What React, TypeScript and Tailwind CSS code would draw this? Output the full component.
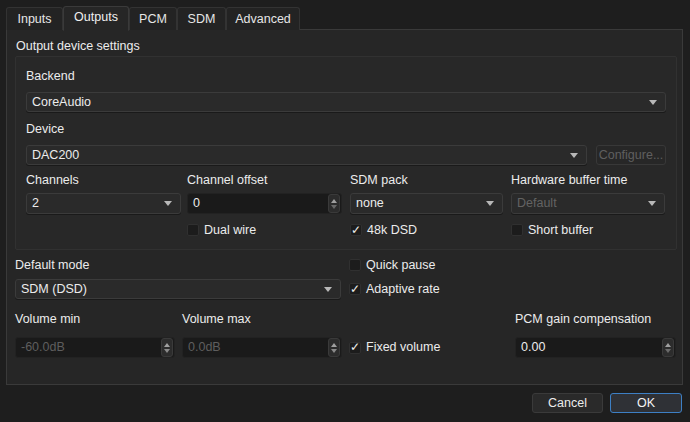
import React from 'react';

const font = { fontFamily: '"Liberation Sans", Arial, sans-serif' };

function Arrow() {
  return (
    <svg width="8" height="5" viewBox="0 0 8 5" className="shrink-0">
      <path d="M0 0 L8 0 L4 5 Z" fill="#b8b8b8" />
    </svg>
  );
}

function Combo({ value, disabled, className = '' }: { value: string; disabled?: boolean; className?: string }) {
  return (
    <div
      className={`h-[20px] flex items-center justify-between pl-[5px] pr-[8px] rounded-[3px] border border-[#3b3b3b] bg-[#2a2a2a] shadow-[0_1px_0_#1a1a1a] ${className}`}
    >
      <span className={disabled ? 'text-[#636363]' : 'text-[#ececec]'}>{value}</span>
      <Arrow />
    </div>
  );
}

function Spin({ value, disabled, className = '' }: { value: string; disabled?: boolean; className?: string }) {
  return (
    <div className={`h-[21px] flex items-center rounded-[3px] bg-[#1a1a1a] border border-[#222] ${className}`}>
      <span className={`flex-1 pl-[5px] ${disabled ? 'text-[#5e5e5e]' : 'text-[#ececec]'}`}>{value}</span>
      <div className="w-[12px] h-[19px] mr-[1px] rounded-[3px] bg-[#2c2c2c] border border-[#3a3a3a] flex flex-col items-center justify-center gap-[2px]">
        <svg width="6" height="4" viewBox="0 0 6 4">
          <path d="M0 4 L3 0 L6 4 Z" fill="#a0a0a0" />
        </svg>
        <svg width="6" height="4" viewBox="0 0 6 4">
          <path d="M0 0 L6 0 L3 4 Z" fill={disabled ? '#8a8a8a' : '#6a6a6a'} />
        </svg>
      </div>
    </div>
  );
}

function Check({ label, checked }: { label: string; checked?: boolean }) {
  return (
    <div className="flex items-center h-[16px]">
      <div className="w-[12px] h-[12px] rounded-[2px] bg-[#1c1c1c] border border-[#303030] flex items-center justify-center">
        {checked && <span className="text-[#ececec] text-[12px] leading-none -mt-[1px]">✓</span>}
      </div>
      <span className="ml-[5px] text-[#ececec]">{label}</span>
    </div>
  );
}

function Label({ children, className = '' }: { children: React.ReactNode; className?: string }) {
  return <div className={`text-[#ececec] h-[16px] leading-[16px] ${className}`}>{children}</div>;
}

const tabs = ['Inputs', 'Outputs', 'PCM', 'SDM', 'Advanced'];

export default function App() {
  return (
    <div style={font} className="w-[690px] h-[422px] bg-[#1e1e1e] text-[12.5px] overflow-hidden relative">
      {/* tab bar */}
      <div className="flex items-end h-[30px] pl-[6px]">
        {tabs.map((t) =>
          t === 'Outputs' ? (
            <div
              key={t}
              className="h-[25px] w-[66px] -mb-[1px] flex items-center justify-center bg-[#262626] border border-[#3a3a3a] border-b-[#262626] rounded-t-[3px] text-[#f0f0f0] relative z-10 pb-[3px]"
            >
              {t}
            </div>
          ) : (
            <div
              key={t}
              className={`h-[23px] flex items-center justify-center bg-[#232323] border border-[#333] border-b-0 rounded-t-[3px] text-[#e6e6e6] ${
                t === 'Inputs' ? 'w-[57px]' : t === 'PCM' ? 'w-[48px]' : t === 'SDM' ? 'w-[49px]' : 'w-[74px]'
              }`}
            >
              {t}
            </div>
          )
        )}
      </div>

      {/* pane */}
      <div className="ml-[6px] w-[677px] h-[356px] -mt-[1px] bg-[#262626] border border-[#3a3a3a] pt-[8px] pl-[8px] pr-[5px]">
        <Label className="ml-[1px]">Output device settings</Label>

        <div className="mt-[2px] w-[662px] h-[194px] border border-[#313131] bg-[#282828] rounded-[2px] px-[10px] pt-[11px]">
          <Label>Backend</Label>
          <Combo value="CoreAudio" className="mt-[8px]" />
          <Label className="mt-[9px]">Device</Label>
          <div className="flex gap-[9px] mt-[8px]">
            <Combo value="DAC200" className="flex-1" />
            <div className="w-[70px] h-[20px] rounded-[3px] border border-[#383838] bg-[#272727] flex items-center justify-center text-[#5f5f5f]">
              Configure...
            </div>
          </div>
          <div className="flex mt-[7px]">
            <Label className="w-[155px]">Channels</Label>
            <Label className="w-[155px] ml-[6px]">Channel offset</Label>
            <Label className="w-[153px] ml-[8px]">SDM pack</Label>
            <Label className="w-[154px] ml-[8px]">Hardware buffer time</Label>
          </div>
          <div className="flex mt-[5px]">
            <Combo value="2" className="h-[21px] w-[155px]" />
            <Spin value="0" className="w-[155px] ml-[6px]" />
            <Combo value="none" className="h-[21px] w-[153px] ml-[8px]" />
            <Combo value="Default" disabled className="h-[21px] w-[154px] ml-[8px]" />
          </div>
          <div className="flex mt-[8px]">
            <div className="w-[155px]" />
            <div className="w-[155px] ml-[6px]">
              <Check label="Dual wire" />
            </div>
            <div className="w-[153px] ml-[8px]">
              <Check label="48k DSD" checked />
            </div>
            <div className="w-[154px] ml-[8px]">
              <Check label="Short buffer" />
            </div>
          </div>
        </div>

        <div className="grid grid-cols-[160px_160px_159px_161px] gap-x-[7px] w-[662px] mt-[7px]">
          <Label className="col-span-2">Default mode</Label>
          <div className="col-span-2">
            <Check label="Quick pause" />
          </div>
        </div>
        <div className="grid grid-cols-[160px_160px_159px_161px] gap-x-[7px] w-[662px] mt-[6px]">
          <Combo value="SDM (DSD)" className="col-span-2 mr-[1px]" />
          <div className="col-span-2 pt-[2px]">
            <Check label="Adaptive rate" checked />
          </div>
        </div>
        <div className="grid grid-cols-[160px_160px_159px_161px] gap-x-[7px] w-[662px] mt-[12px]">
          <Label>Volume min</Label>
          <Label>Volume max</Label>
          <div />
          <Label>PCM gain compensation</Label>
        </div>
        <div className="grid grid-cols-[160px_160px_159px_161px] gap-x-[7px] w-[662px] mt-[10px] items-center">
          <Spin value="-60.0dB" disabled />
          <Spin value="0.0dB" disabled />
          <Check label="Fixed volume" checked />
          <Spin value="0.00" />
        </div>
      </div>

      {/* buttons */}
      <div className="flex justify-end gap-[7px] pr-[8px] mt-[8px]">
        <div className="w-[71px] h-[20px] rounded-[3px] border border-[#3a3a3a] bg-[#2a2a2a] flex items-center justify-center text-[#ececec]">
          Cancel
        </div>
        <div className="w-[72px] h-[20px] rounded-[3px] border border-[#3d7fc4] bg-[#2f3136] flex items-center justify-center text-[#f4f4f4]">
          OK
        </div>
      </div>
    </div>
  );
}
